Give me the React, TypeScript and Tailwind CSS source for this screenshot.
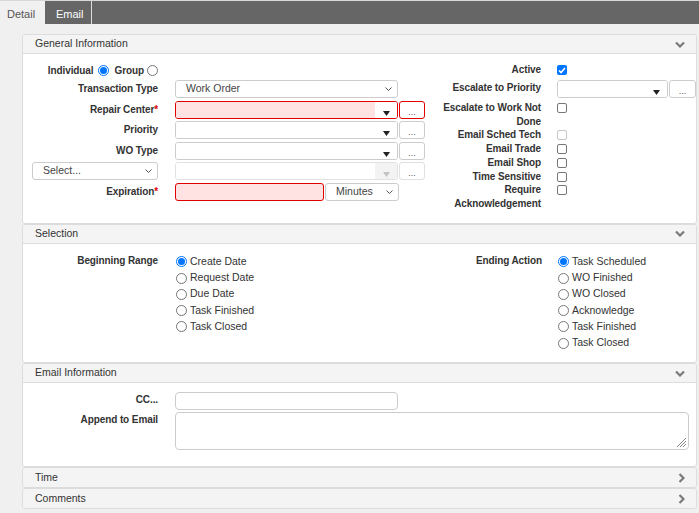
import React from "react";

const ChevDown = () => (
  <svg width="10" height="7" viewBox="0 0 10 7">
    <path d="M1 1.5L5 5.5L9 1.5" stroke="#7a7a7a" strokeWidth="2.2" fill="none" />
  </svg>
);

const ChevRight = () => (
  <svg width="7" height="10" viewBox="0 0 7 10">
    <path d="M1.5 1L5.5 5L1.5 9" stroke="#7a7a7a" strokeWidth="2.2" fill="none" />
  </svg>
);

const SmallChev = () => (
  <svg width="7" height="4" viewBox="0 0 7 4">
    <path d="M0.5 0.5L3.5 3.5L6.5 0.5" stroke="#555" fill="none" />
  </svg>
);

const Tri = ({ light }: { light?: boolean }) => (
  <svg width="7" height="5" viewBox="0 0 7 5">
    <path d="M0 0H7L3.5 5Z" fill={light ? "#c4c4c4" : "#222"} />
  </svg>
);

const Radio = ({ on }: { on?: boolean }) =>
  on ? (
    <div className="w-[11px] h-[11px] rounded-full border border-[#0075ff] flex items-center justify-center shrink-0">
      <div className="w-[7px] h-[7px] rounded-full bg-[#0075ff]" />
    </div>
  ) : (
    <div className="w-[11px] h-[11px] rounded-full border border-[#767676] bg-white shrink-0" />
  );

const Check = ({ on, off }: { on?: boolean; off?: boolean }) =>
  on ? (
    <div className="w-[10px] h-[10px] rounded-[2px] bg-[#0075ff] flex items-center justify-center">
      <svg width="8" height="7" viewBox="0 0 8 7">
        <path d="M1 3.5L3 5.5L7 1" stroke="white" strokeWidth="1.6" fill="none" />
      </svg>
    </div>
  ) : (
    <div className={`w-[10px] h-[10px] rounded-[2px] border bg-white ${off ? "border-[#c6c6c6]" : "border-[#767676]"}`} />
  );

const Dots = ({ red, light, w = "w-[26px]" }: { red?: boolean; light?: boolean; w?: string }) => (
  <div
    className={`${w} h-[18px] ml-[1px] rounded-[3px] border bg-white flex items-end justify-center pb-[1px] text-[9px] leading-none text-[#555] ${
      red ? "border-[#e00000]" : light ? "border-[#e0e0e0]" : "border-[#ccc]"
    }`}
  >
    ...
  </div>
);

const Select = ({ text, w }: { text?: string; w: string }) => (
  <div className={`${w} h-[18px] rounded-[3px] border border-[#ccc] bg-white flex items-center justify-between pl-[10px] pr-[5px] text-[10.5px] text-[#444]`}>
    <span>{text}</span>
    <SmallChev />
  </div>
);

const Combo = ({ red, light, w = "w-[223px]" }: { red?: boolean; light?: boolean; w?: string }) => (
  <div
    className={`${w} h-[18px] rounded-[3px] border flex overflow-hidden ${
      red ? "border-[#e00000]" : light ? "border-[#e2e2e2]" : "border-[#ccc]"
    }`}
  >
    <div className={`flex-1 ${red ? "bg-[#ffe2e2]" : "bg-white"}`} />
    <div className={`w-[22px] flex items-end justify-center pb-[2px] ${light ? "bg-[#f3f3f3]" : "bg-white"}`}>
      <Tri light={light} />
    </div>
  </div>
);

const Lbl = ({ children, className = "" }: { children: React.ReactNode; className?: string }) => (
  <div className={`text-right font-bold text-[10px] tracking-[-0.1px] leading-[13.7px] text-[#333] ${className}`}>{children}</div>
);

const Req = () => <span className="text-[#e00000]">*</span>;

const Row = ({ label, children }: { label: React.ReactNode; children: React.ReactNode }) => (
  <div className="flex h-[18px]">
    <div className="w-[135px] flex justify-end">{label}</div>
    <div className="ml-[17px] flex">{children}</div>
  </div>
);

const RRow = ({ label, children }: { label: React.ReactNode; children: React.ReactNode }) => (
  <div className="flex">
    <Lbl className="w-[108px]">{label}</Lbl>
    <div className="ml-[16px] pt-[2px]">{children}</div>
  </div>
);

const Section = ({
  title,
  open = true,
  children,
}: {
  title: string;
  open?: boolean;
  children?: React.ReactNode;
}) => (
  <div className="border border-[#dcdcdc] rounded-[3px] bg-white overflow-hidden">
    <div className={`h-[19px] bg-[#f4f4f4] flex items-center justify-between pl-[12px] pr-[11px] text-[10.5px] text-[#333] ${children ? "border-b border-[#dcdcdc]" : ""}`}>
      <span>{title}</span>
      {open ? <ChevDown /> : <ChevRight />}
    </div>
    {children}
  </div>
);

const RadioList = ({ items, on }: { items: string[]; on: number }) => (
  <div className="flex flex-col">
    {items.map((t, i) => (
      <div key={t} className="h-[16.25px] flex items-center gap-[3px] pl-[1px] text-[10.5px] text-[#333]">
        <Radio on={i === on} />
        <span>{t}</span>
      </div>
    ))}
  </div>
);

export default function App() {
  return (
    <div className="h-screen overflow-hidden bg-[#f0f0f0] font-['Liberation_Sans',Arial,sans-serif] text-[#333]">
      <div className="flex h-[24px] bg-[#666] border-t border-[#d8d8d8] text-[11px]">
        <div className="w-[45px] bg-[#f0f0f0] text-[#555] pl-[7px] pt-[5px]">Detail</div>
        <div className="w-[47px] text-white border-r border-[#ddd] pl-[11px] pt-[5px]">Email</div>
      </div>

      <div className="pl-[22px] pr-[2px] pt-[10px] pb-[4px] flex flex-col">
        <Section title="General Information">
          <div className="flex pt-[9px] pb-[12px]">
            <div className="w-[411px] flex flex-col">
              <div className="w-[135px] h-[14px] flex items-center justify-end font-bold text-[10px] tracking-[-0.1px]">
                <span>Individual</span>
                <div className="ml-[4px]"><Radio on /></div>
                <span className="ml-[6px]">Group</span>
                <div className="ml-[3px]"><Radio /></div>
              </div>
              <div className="flex flex-col gap-[2.5px] mt-[3px]">
                <Row label={<Lbl className="pt-[2px]">Transaction Type</Lbl>}>
                  <Select text="Work Order" w="w-[223px]" />
                </Row>
                <Row label={<Lbl className="pt-[2px]">Repair Center<Req /></Lbl>}>
                  <Combo red />
                  <Dots red />
                </Row>
                <Row label={<Lbl className="pt-[2px]">Priority</Lbl>}>
                  <Combo />
                  <Dots />
                </Row>
                <Row label={<Lbl className="pt-[2px]">WO Type</Lbl>}>
                  <Combo />
                  <Dots />
                </Row>
                <Row label={<Select text="Select..." w="w-[126px]" />}>
                  <Combo light />
                  <Dots light />
                </Row>
                <Row label={<Lbl className="pt-[2px]">Expiration<Req /></Lbl>}>
                  <div className="w-[149px] h-[18px] rounded-[3px] border border-[#e00000] bg-[#ffe2e2]" />
                  <div className="ml-[1px]">
                    <Select text="Minutes" w="w-[74px]" />
                  </div>
                </Row>
              </div>
            </div>

            <div className="flex-1 flex flex-col">
              <div className="h-[14px] flex items-center">
                <Lbl className="w-[108px]">Active</Lbl>
                <div className="ml-[16px]"><Check on /></div>
              </div>
              <div className="flex h-[18px] mt-[3px]">
                <Lbl className="w-[108px] pt-[1px]">Escalate to Priority</Lbl>
                <div className="ml-[16px] flex">
                  <Combo w="w-[111px]" />
                  <Dots w="w-[27px]" />
                </div>
              </div>
              <div className="flex flex-col mt-[3px]">
                <RRow label="Escalate to Work Not Done"><Check /></RRow>
                <RRow label="Email Sched Tech"><Check off /></RRow>
                <RRow label="Email Trade"><Check /></RRow>
                <RRow label="Email Shop"><Check /></RRow>
                <RRow label="Time Sensitive"><Check /></RRow>
                <RRow label="Require Acknowledgement"><Check /></RRow>
              </div>
            </div>
          </div>
        </Section>

        <Section title="Selection">
          <div className="flex pt-[10px] pb-[11px]">
            <div className="w-[411px] flex">
              <Lbl className="w-[135px]">Beginning Range</Lbl>
              <div className="ml-[17px]">
                <RadioList on={0} items={["Create Date", "Request Date", "Due Date", "Task Finished", "Task Closed"]} />
              </div>
            </div>
            <div className="flex-1 flex">
              <Lbl className="w-[108px]">Ending Action</Lbl>
              <div className="ml-[15px]">
                <RadioList
                  on={0}
                  items={["Task Scheduled", "WO Finished", "WO Closed", "Acknowledge", "Task Finished", "Task Closed"]}
                />
              </div>
            </div>
          </div>
        </Section>

        <Section title="Email Information">
          <div className="flex flex-col gap-[2px] pt-[9px] pb-[16px]">
            <div className="flex">
              <Lbl className="w-[135px] pt-[1px]">CC...</Lbl>
              <div className="ml-[17px] w-[223px] h-[18px] rounded-[4px] border border-[#ccc] bg-white" />
            </div>
            <div className="flex">
              <Lbl className="w-[135px] pt-[1px]">Append to Email</Lbl>
              <div className="ml-[17px] w-[514px] h-[38px] rounded-[4px] border border-[#ccc] bg-white flex items-end justify-end p-[1px]">
                <svg width="11" height="11" viewBox="0 0 11 11">
                  <path d="M10 1L1 10M10 4L4 10M10 7L7 10" stroke="#888" strokeWidth="1" />
                </svg>
              </div>
            </div>
          </div>
        </Section>

        <Section title="Time" open={false} />
        <Section title="Comments" open={false} />
      </div>
    </div>
  );
}
